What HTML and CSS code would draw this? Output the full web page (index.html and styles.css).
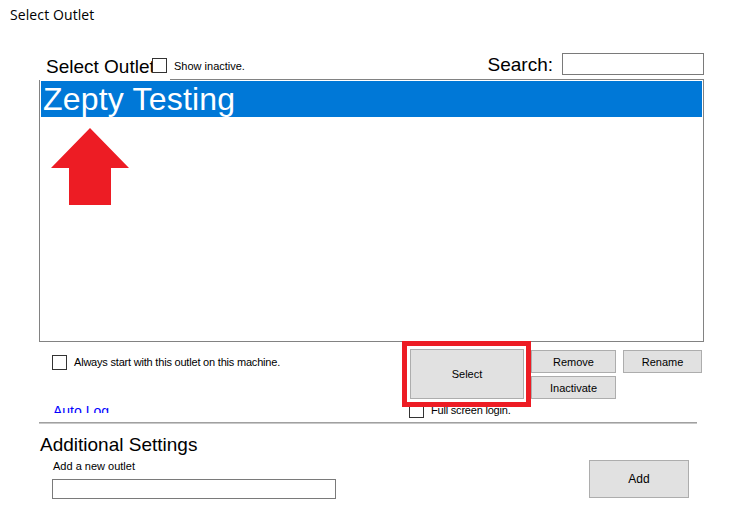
FILE: index.html
```html
<!DOCTYPE html>
<html>
<head>
<meta charset="utf-8">
<title>Select Outlet</title>
<link rel="stylesheet" href="styles.css">
</head>
<body>
<div class="page">
  <div class="title">Select Outlet</div>

  <section class="outlets">
    <div class="head">
      <div class="head-left">
        <span class="group-label">Select Outlet</span>
        <span class="box"></span>
        <span class="small inactive-label">Show inactive.</span>
      </div>
      <div class="search">
        <span class="search-label">Search:</span>
        <span class="textbox search-box"></span>
      </div>
    </div>
    <div class="list-top"></div>
    <div class="listbox">
      <div class="item selected">Zepty Testing</div>
    </div>
    <svg class="arrow" width="78" height="78" viewBox="0 0 78 78">
      <polygon points="39,0 78,40 60,40 60,77 18,77 18,40 0,40" fill="#ed1c24"/>
    </svg>
  </section>

  <div class="controls">
    <div class="ctrl-left">
      <div class="check-row always">
        <span class="box"></span>
        <span class="small check-text tight">Always start with this outlet on this machine.</span>
      </div>
      <div class="autoloc"><span>Auto Login</span></div>
    </div>
    <div class="ctrl-right">
      <div class="btn-row">
        <div class="select-wrap">
          <div class="btn btn-select">Select</div>
          <div class="highlight"></div>
        </div>
        <div class="btn-col">
          <div class="btn btn-small">Remove</div>
          <div class="btn btn-small">Inactivate</div>
        </div>
        <div class="btn btn-small btn-rename">Rename</div>
      </div>
      <div class="check-row fullscreen">
        <span class="box"></span>
        <span class="small check-text tight">Full screen login.</span>
      </div>
    </div>
  </div>

  <div class="sep"></div>

  <section class="additional">
    <div class="add-left">
      <div class="add-title">Additional Settings</div>
      <div class="small add-label">Add a new outlet</div>
      <div class="textbox add-box"></div>
    </div>
    <div class="btn btn-add">Add</div>
  </section>
</div>
</body>
</html>
```

FILE: styles.css
```css
html, body {
  margin: 0;
  padding: 0;
  background: #ffffff;
}

body {
  font-family: "Liberation Sans", Arial, sans-serif;
  color: #000000;
}

.page {
  width: 745px;
  height: 526px;
  overflow: hidden;
  position: relative;
}

.title {
  font-family: "Open Sans", "Noto Sans", sans-serif;
  font-size: 14px;
  line-height: 19px;
  height: 19px;
  padding: 5px 0 0 10px;
  letter-spacing: 0.1px;
}

.small {
  font-size: 11px;
  line-height: 13px;
  white-space: nowrap;
}

.tight {
  letter-spacing: -0.2px;
}

.box {
  display: block;
  width: 15px;
  height: 15px;
  box-sizing: border-box;
  border: 1px solid #333333;
  background: #ffffff;
  flex: none;
}

/* ---------- outlets group ---------- */
.outlets {
  position: relative;
  margin-left: 39px;
  margin-top: 29px;
  width: 665px;
}

.head {
  display: flex;
  justify-content: space-between;
  align-items: flex-start;
  height: 26px;
}

.head-left {
  display: flex;
  align-items: flex-start;
}

.group-label {
  display: block;
  margin-left: 7px;
  margin-top: 3px;
  width: 106px;
  overflow: hidden;
  white-space: nowrap;
  font-size: 19px;
  line-height: 22px;
}

.head-left .box {
  margin-top: 5px;
}

.inactive-label {
  margin-left: 7px;
  margin-top: 7px;
}

.search {
  display: flex;
  align-items: flex-start;
}

.search-label {
  font-size: 19px;
  line-height: 22px;
  margin-top: 1px;
}

.textbox {
  display: block;
  box-sizing: border-box;
  border: 1px solid #7a7a7a;
  background: #ffffff;
}

.search-box {
  width: 142px;
  height: 22px;
  margin-left: 9px;
}

.list-top {
  height: 1px;
  margin-left: 131px;
  background: #828282;
}

.listbox {
  box-sizing: border-box;
  height: 262px;
  border: 1px solid #828282;
  border-top: 0;
  padding: 1px;
}

.item {
  height: 36px;
  line-height: 37px;
  font-size: 32px;
  padding-left: 2px;
  white-space: nowrap;
  letter-spacing: 0.2px;
}

.item.selected {
  background: #0078d7;
  color: #ffffff;
}

.arrow {
  position: absolute;
  left: 12px;
  top: 75px;
}

/* ---------- controls under list ---------- */
.controls {
  display: flex;
  height: 80px;
}

.ctrl-left {
  box-sizing: border-box;
  width: 410px;
  padding-left: 52px;
}

.check-row {
  display: flex;
  align-items: flex-start;
}

.check-text {
  margin-left: 7px;
  margin-top: 1px;
}

.always {
  margin-top: 13px;
}

.autoloc {
  margin-top: 33px;
  margin-left: 1px;
  height: 10px;
  overflow: hidden;
  font-size: 14px;
  line-height: 16px;
  color: #0000ff;
  white-space: nowrap;
}

.autoloc span {
  display: block;
  width: 56px;
  overflow: hidden;
}

.ctrl-right {
  display: flex;
  flex-direction: column;
}

.btn-row {
  display: flex;
  align-items: flex-start;
  gap: 7px;
  margin-top: 7px;
}

.btn {
  box-sizing: border-box;
  background: #e1e1e1;
  border: 1px solid #adadad;
  font-size: 11px;
  display: flex;
  align-items: center;
  justify-content: center;
  white-space: nowrap;
}

.select-wrap {
  position: relative;
}

.btn-select {
  width: 114px;
  height: 50px;
}

.highlight {
  position: absolute;
  left: -8px;
  top: -8px;
  width: 129px;
  height: 66px;
  box-sizing: border-box;
  border: 5px solid #ed1c24;
  z-index: 2;
}

.btn-col {
  display: flex;
  flex-direction: column;
  gap: 3px;
  margin-top: 1px;
}

.btn-small {
  width: 85px;
  height: 23px;
}

.btn-rename {
  width: 79px;
  margin-top: 1px;
}

.fullscreen {
  margin-top: 4px;
  margin-left: -1px;
}

.fullscreen .check-text {
  margin-top: 1px;
}

/* ---------- separator ---------- */
.sep {
  margin-left: 39px;
  width: 658px;
  height: 0;
  border-top: 1px solid #a0a0a0;
  border-bottom: 1px solid #c8c8c8;
}

/* ---------- additional settings ---------- */
.additional {
  display: flex;
  align-items: flex-start;
  margin-top: 10px;
  margin-left: 40px;
}

.add-left {
  width: 549px;
}

.add-title {
  font-size: 19px;
  line-height: 22px;
  white-space: nowrap;
}

.add-label {
  margin-top: 4px;
  margin-left: 13px;
}

.add-box {
  margin-top: 6px;
  margin-left: 12px;
  width: 284px;
  height: 20px;
}

.btn-add {
  width: 100px;
  height: 38px;
  margin-top: 26px;
  font-size: 12px;
}
```
